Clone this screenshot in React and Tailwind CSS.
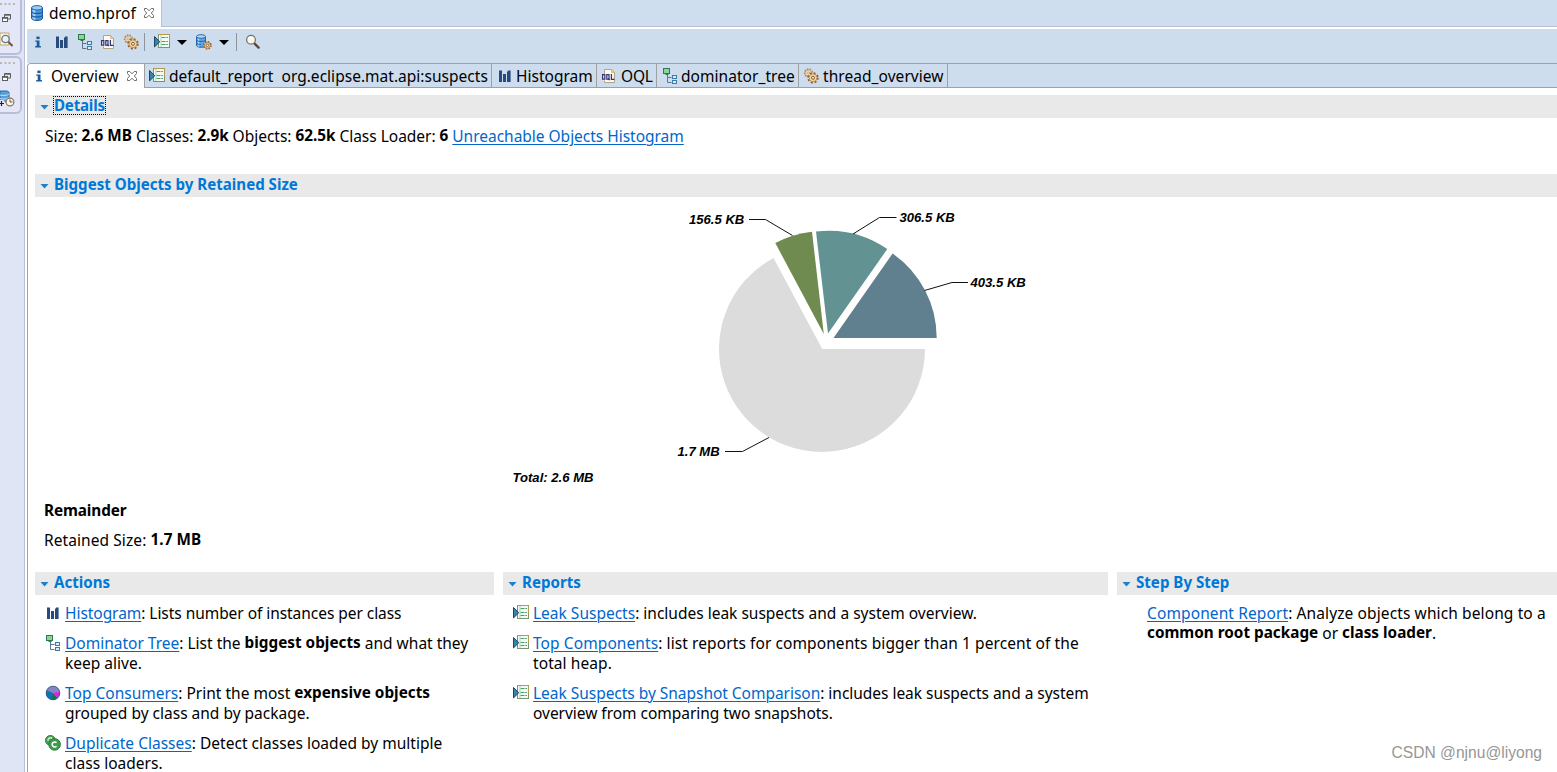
const Ico = ({ children, className = "" }) => (
  <svg viewBox="0 0 16 16" width="16" height="16" className={"block shrink-0 " + className}>{children}</svg>
);

const Info = ({ className }) => (
  <Ico className={className}>
    <rect x="6.4" y="2.6" width="3.2" height="2.5" fill="#1b5a9c" />
    <path d="M5.3 6.5h4.2v5.6h1.4v1.4H5.2v-1.4h1.5V7.7H5.3z" fill="#1b5a9c" />
  </Ico>
);

const Bars = ({ className }) => (
  <Ico className={className}>
    <path d="M2 2.6h3v11.4H2zM6 6h3v8H6zM10 3.600h1v-1h2.600v11.400H10z" fill="#274b7d" />
  </Ico>
);

const Tree = ({ className }) => (
  <Ico className={className}>
    <path d="M5.500 7v7.500h4M5.500 9.500h4" fill="none" stroke="#5c7690" />
    <rect x="1.500" y=".5" width="6" height="5" fill="#8ed39a" stroke="#2c7a4b" />
    <path d="M3.500 6.500h3" stroke="#2c7a4b" />
    <rect x="10.500" y="7.500" width="4" height="3" fill="#d7ebfa" stroke="#427aa8" />
    <rect x="10.500" y="12.500" width="4" height="3" fill="#d7ebfa" stroke="#427aa8" />
  </Ico>
);

const Oql = ({ className }) => (
  <Ico className={className}>
    <path d="M3.500 1.500h7l3 3v10h-10z" fill="#fbfaf4" stroke="#b3a584" />
    <path d="M10.500 1.500v3h3z" fill="#efd588" stroke="#c9a650" strokeWidth=".6" />
    <rect x="1.200" y="6" width="11.800" height="6.400" fill="#f4f3f8" />
    <g fill="none" stroke="#35346e" strokeWidth="1.200">
      <rect x="1.600" y="6.600" width="2.200" height="4.600" />
      <rect x="5.800" y="6.600" width="2.200" height="4.600" />
      <path d="M7.200 10.500l1.400 1.700M10.400 6v5.300h3" />
    </g>
  </Ico>
);

const Gears = ({ className }) => (
  <Ico className={className}>
    <circle cx="5.500" cy="5" r="3.900" fill="#f6e3c0" stroke="#a98258" strokeWidth="1.600" strokeDasharray="1.600 1.100" />
    <circle cx="5.500" cy="5" r="2.900" fill="#f6e6c8" stroke="#c09a6a" strokeWidth=".8" />
    <circle cx="5.500" cy="5" r="1" fill="#fff" stroke="#a98258" strokeWidth=".7" />
    <circle cx="10" cy="9.800" r="4.900" fill="#f1d8a8" stroke="#8c5c33" strokeWidth="1.600" strokeDasharray="2 1.850" />
    <circle cx="10" cy="9.800" r="3.900" fill="#f3d9a5" stroke="#a0703e" strokeWidth=".7" />
    <circle cx="10" cy="9.800" r="1.500" fill="#fbf6ec" stroke="#83532b" />
  </Ico>
);

const Report = ({ className }) => (
  <Ico className={className}>
    <rect x="4.500" y=".5" width="11" height="13" fill="#f2faf3" stroke="#7c9270" />
    <path d="M4.500 .5h11v8" fill="none" stroke="#b8994f" />
    <path d="M7.500 3.500h4M7.500 7.500h4M7.500 10.500h4" stroke="#48a067" />
    <path d="M12.500 3.500h1.200M12.500 7.500h1.200M12.500 10.500h1.200" stroke="#256d48" />
    <path d="M7 1v12" stroke="#8ec49d" strokeWidth=".7" />
    <path d="M.5 2.500l5.300 5.200-5.300 5.200z" fill="#3a83a8" stroke="#1c4669" />
  </Ico>
);

const Database = ({ className }) => (
  <Ico className={className}>
    <path d="M2.500 3v10.200c0 1.300 2.400 2.300 5.500 2.300s5.500-1 5.500-2.300V3z" fill="#4b95db" stroke="#1d5c9f" />
    <path d="M4.200 4.500v9.800M5.700 5v9.800" stroke="#b5dbfa" strokeWidth="1.200" />
    <path d="M2.500 6.200c0 1.300 2.400 2.200 5.500 2.200s5.500-.9 5.500-2.200M2.500 9.700c0 1.300 2.400 2.200 5.500 2.200s5.500-.9 5.500-2.200" fill="none" stroke="#1d5c9f" strokeWidth="1.200" />
    <ellipse cx="8" cy="2.800" rx="5.500" ry="2.200" fill="#9bcdf5" stroke="#2767a8" />
  </Ico>
);

const DatabaseGear = ({ className }) => (
  <Ico className={className}>
    <path d="M.5 2.700v8.800c0 1 2 1.800 4.500 1.800s4.500-.8 4.500-1.800V2.700z" fill="#5da4e4" stroke="#2767a8" />
    <path d="M2.500 4.500v8" stroke="#b9dcf8" strokeWidth="1.400" />
    <path d="M.5 5.700c0 1 2 1.800 4.500 1.800s4.500-.8 4.500-1.800M.5 8.800c0 1 2 1.800 4.500 1.800" fill="none" stroke="#2767a8" />
    <ellipse cx="5" cy="2.500" rx="4.500" ry="1.800" fill="#b4daf7" stroke="#2767a8" />
    <circle cx="11.400" cy="11.400" r="3.600" fill="#f1d8a8" stroke="#8c5c33" strokeWidth="1.500" strokeDasharray="1.600 1.230" />
    <circle cx="11.400" cy="11.400" r="2.900" fill="#f1d49b" stroke="#9a6a38" strokeWidth=".7" />
    <circle cx="11.400" cy="11.400" r="1.200" fill="#fff" stroke="#83532b" strokeWidth=".9" />
  </Ico>
);

const Magnifier = ({ className }) => (
  <Ico className={className}>
    <path d="M9.600 9.600l4 4" stroke="#5b4939" strokeWidth="2.400" strokeLinecap="round" />
    <circle cx="6" cy="5.800" r="4.400" fill="#f7f8ec" stroke="#77736a" strokeWidth="1.300" />
    <path d="M3.600 5.800A2.400 2.400 0 0 1 6 3.400" fill="none" stroke="#fff" strokeWidth="1.200" />
  </Ico>
);

const PieIcon = ({ className }) => (
  <Ico className={className}>
    <circle cx="8" cy="8" r="7" fill="#8583c0" />
    <path d="M8 8L1.600 5.200A7 7 0 0 0 6 14.700z" fill="#0f72b4" />
    <path d="M8 8l-2 6.700a7 7 0 0 0 6.500-1.400z" fill="#087a4a" />
    <path d="M8 8l4.500 4.500A7 7 0 0 0 15 7z" fill="#f414e8" />
    <circle cx="8" cy="8" r="6.800" fill="none" stroke="#365b8c" strokeWidth=".9" />
  </Ico>
);

const Duplicate = ({ className }) => (
  <Ico className={className}>
    <circle cx="5.400" cy="5.400" r="4.900" fill="#4ba356" stroke="#2c7d3d" />
    <path d="M7.200 3.400A2.600 2.600 0 0 0 3 5.800" fill="none" stroke="#d7f0d8" strokeWidth="1.300" />
    <circle cx="9.600" cy="9.400" r="5.800" fill="#3f9c4b" stroke="#2c7d3d" />
    <path d="M11.500 7.700a2.500 2.500 0 1 0 0 3.500" fill="none" stroke="#fff" strokeWidth="1.600" />
  </Ico>
);

const Close = ({ className = "" }) => (
  <svg viewBox="0 0 12 12" width="12" height="12" className={"block shrink-0 " + className}>
    <path d="M1.500 1.500h2.300L6 3.800l2.200-2.300h2.300v2L8.300 6l2.200 2.500v2H8.200L6 8.200l-2.200 2.300H1.500v-2L3.700 6 1.500 3.500z" fill="#fff" stroke="#6e6e6e" />
  </svg>
);

const Caret = ({ className = "" }) => (
  <svg viewBox="0 0 10 5" width="10" height="5" className={"block shrink-0 " + className}><path d="M0 0h10L5 5z" fill="#000" /></svg>
);

const Restore = ({ className = "" }) => (
  <svg viewBox="0 0 9 9" width="9" height="9" className={"block shrink-0 " + className}>
    <path d="M2.500 3V.5h6V5H6M2.500 1.200h6" fill="none" stroke="#5d5d5d" />
    <rect x=".5" y="3.500" width="5" height="4" fill="#fff" stroke="#5d5d5d" />
    <path d="M0 4h6" stroke="#5d5d5d" strokeWidth="1.600" />
  </svg>
);

const Dots = ({ className = "" }) => (
  <svg viewBox="0 0 16 2" width="16" height="2" className={"block " + className}>
    <path d="M0 1h2M4.500 1h2M8.500 1h2M13 1h2" stroke="#aaa59d" strokeWidth="1.600" />
  </svg>
);

const Header = ({ children, focus }) => (
  <div className="flex h-[23px] items-center bg-[#e9e9e9] pl-[5px]">
    <svg viewBox="0 0 8 5" width="9" height="5" className="mt-px mr-[4px] block"><path d="M0 0h8L4 4.500z" fill="#1a80d2" /></svg>
    <span className={"mb-[2px] border border-dotted text-[15.1px] leading-[17px] font-bold text-[#0078d7] " + (focus ? "border-black tracking-[-0.2px]" : "border-transparent")}>{children}</span>
  </div>
);

const Link = ({ children }) => (
  <a className="text-[#0066cc] underline decoration-1 underline-offset-2">{children}</a>
);

const B = ({ children }) => <b className="align-[1px] text-[15.3px] leading-none font-bold">{children}</b>;

const Item = ({ icon: Icon, className = "", children }) => (
  <div className={"flex leading-5 " + className}>
    <Icon className="mt-[2px] mr-1" />
    <div>{children}</div>
  </div>
);

const Tab = ({ icon: Icon, children, className }) => (
  <div className={"flex h-full items-center border-r border-[#a0a0a0] whitespace-pre " + className}>
    <Icon className="mr-[4px]" />
    <span>{children}</span>
  </div>
);

const Chart = () => (
  <svg viewBox="35 197 1522 303" width="1522" height="303" className="block shrink-0">
    <path d="M822.300 349H925A103 103 0 1 1 773.500 258z" fill="#dcdcdc" />
    <path d="M833.500 338L892.600 253.500A103 103 0 0 1 936.700 338z" fill="#607f8f" />
    <path d="M828 333.500L816 231.500A103 103 0 0 1 887.300 249z" fill="#629292" />
    <path d="M823.800 334L775.300 243A103 103 0 0 1 812 231.700z" fill="#6f8b50" />
    <g fill="none" stroke="#111">
      <path d="M749 219.500H765.500L792.500 235.500" />
      <path d="M853 234L879.500 217.500H896.500" />
      <path d="M924.500 290.500L952 282.500H968" />
      <path d="M725 451.500H742.500L769 437.500" />
    </g>
    <g className="text-[13.1px] font-bold italic" fill="#000">
      <text x="689" y="224">156.5 KB</text>
      <text x="899.500" y="222">306.5 KB</text>
      <text x="970.500" y="287">403.5 KB</text>
      <text x="677.500" y="456">1.7 MB</text>
      <text x="512.500" y="482">Total: 2.6 MB</text>
    </g>
  </svg>
);

export default function App() {
  return (
    <div className="relative flex h-[772px] w-[1557px] overflow-hidden bg-white font-['Noto_Sans',sans-serif] text-[15.5px] leading-5 text-black">
      <aside className="flex w-6 shrink-0 flex-col bg-[#dfe5f5]">
        <div className="flex h-[55px] w-[22px] flex-col rounded-br-[6px] border-r-2 border-b-2 border-[#b9bdd6] bg-[#e3e7f8]">
          <Dots className="mt-[3px]" />
          <Restore className="mt-[9px] ml-[2px]" />
          <svg viewBox="0 0 14 16" width="14" height="16" className="mt-[9px] block">
            <path d="M0 1h9v12H0z" fill="#f8f7ef" stroke="#c2a260" />
            <circle cx="5.500" cy="7" r="3.700" fill="#e8f2f8" stroke="#707880" strokeWidth="1.300" />
            <path d="M8.500 10l4 4" stroke="#6b5140" strokeWidth="2" />
          </svg>
        </div>
        <div className="mt-px flex h-[58px] w-[22px] flex-col rounded-tr-[6px] rounded-br-[6px] border-t-2 border-r-2 border-b-2 border-[#b9bdd6] bg-[#e3e7f8]">
          <Dots className="mt-[4px]" />
          <Restore className="mt-[9px] ml-[2px]" />
          <svg viewBox="0 0 15 17" width="15" height="17" className="mt-[8px] block">
            <path d="M0 1h6c2 0 3 .8 3 1.800v7C8 11 6 12 3 12H0z" fill="#579fdf" stroke="#2767a8" />
            <path d="M0 5c4 1 7 .5 9-1M0 8.500c4 1 7 .5 9-1" fill="none" stroke="#c4e2fa" />
            <path d="M0 10h3l2 2v5H0z" fill="#e3e7f8" />
            <path d="M0 13.500h4M1.500 11v5" stroke="#222" strokeWidth="1.200" />
            <circle cx="10" cy="12" r="3.900" fill="#fbf8ea" stroke="#8d7650" strokeWidth="1.200" />
            <path d="M10 9.500V12h2.500" fill="none" stroke="#555" />
          </svg>
        </div>
      </aside>

      <main className="flex w-[1533px] shrink-0 flex-col border-l border-[#b8bed8]">
        <div className="flex h-[27px] shrink-0 border-b border-[#b9bfd5] bg-[#cfdeee]">
          <div className="flex h-[27px] w-[137px] shrink-0 items-center border-r border-[#b9bfd5] bg-white pb-px pl-1">
            <Database className="mr-1" />
            <span className="tracking-[0.07px]">demo.hprof</span>
            <Close className="ml-[7px]" />
          </div>
        </div>

        <div className="mt-[2px] ml-[2px] flex h-[34px] shrink-0 items-start bg-[#cedded]">
          <div className="flex h-[26px] items-center">
            <Info className="ml-[3px]" />
            <Bars className="ml-[8px]" />
            <Tree className="ml-[7px]" />
            <Oql className="ml-[7px]" />
            <Gears className="ml-[7px]" />
            <div className="ml-[5px] h-[18px] w-px bg-[#8d949c]" />
            <Report className="ml-[9px]" />
            <Caret className="ml-[7px]" />
            <DatabaseGear className="ml-[9px]" />
            <Caret className="ml-[7px]" />
            <div className="ml-[7px] h-[18px] w-px bg-[#8d949c]" />
            <Magnifier className="ml-[8px]" />
          </div>
        </div>

        <div className="ml-[2px] flex h-[25px] shrink-0 rounded-tl-[4px] border-t border-b border-l border-[#a0a0a0] bg-[#cedded]">
          <div className="flex h-[24px] w-[117px] shrink-0 items-center rounded-tl-[3px] border-r border-[#a0a0a0] bg-white pl-[3px]">
            <Info className="mr-[4px]" />
            <span>Overview</span>
            <Close className="ml-[7px]" />
          </div>
          <Tab icon={Report} className="w-[347px] pl-1 tracking-[0.02px]">default_report  org.eclipse.mat.api:suspects</Tab>
          <Tab icon={Bars} className="w-[105px] pl-[5px] [&>svg]:mr-[3px]">Histogram</Tab>
          <Tab icon={Oql} className="w-[60px] pl-1 tracking-[-0.2px]">OQL</Tab>
          <Tab icon={Tree} className="w-[142px] pl-[5px] tracking-[0.05px] [&>svg]:mr-[3px]">dominator_tree</Tab>
          <Tab icon={Gears} className="w-[149px] pl-1 tracking-[0.06px]">thread_overview</Tab>
        </div>

        <div className="ml-[2px] flex flex-1 flex-col border-l border-[#a0a0a0] pt-[7px] pl-[7px]">
          <Header focus>Details</Header>
          <div className="mt-2 mb-[28px] h-5 pl-[10px] tracking-[-0.02px] whitespace-nowrap">
            Size: <B>2.6 MB</B> Classes: <B>2.9k</B> Objects: <B>62.5k</B> Class Loader: <B>6</B> <Link>Unreachable Objects Histogram</Link>
          </div>
          <Header>Biggest Objects by Retained Size</Header>
          <div className="h-[303px] font-['Liberation_Sans',Arial,sans-serif]"><Chart /></div>
          <div className="mt-px h-5 pl-[9px] tracking-[-0.1px]"><B>Remainder</B></div>
          <div className="mt-[9px] mb-[22px] h-5 pl-[9px] tracking-[0.08px]">Retained Size: <B>1.7 MB</B></div>

          <div className="grid grid-cols-[459px_605px_440px] gap-[9px]">
            <section>
              <Header>Actions</Header>
              <div className="mt-2 flex flex-col gap-[10px] pl-[10px] whitespace-nowrap">
                <Item icon={Bars} className="tracking-[-0.05px]"><Link>Histogram</Link>: Lists number of instances per class</Item>
                <Item icon={Tree}><Link>Dominator Tree</Link>: List the <B>biggest objects</B> and what they<br />keep alive.</Item>
                <Item icon={PieIcon}><Link>Top Consumers</Link>: Print the most <B>expensive objects</B><br />grouped by class and by package.</Item>
                <Item icon={Duplicate} className="tracking-[0.02px]"><Link>Duplicate Classes</Link>: Detect classes loaded by multiple<br />class loaders.</Item>
              </div>
            </section>
            <section>
              <Header>Reports</Header>
              <div className="mt-2 flex flex-col gap-[10px] pl-[10px] whitespace-nowrap">
                <Item icon={Report}><Link>Leak Suspects</Link>: includes leak suspects and a system overview.</Item>
                <Item icon={Report} className="tracking-[0.09px]"><Link>Top Components</Link>: list reports for components bigger than 1 percent of the<br />total heap.</Item>
                <Item icon={Report} className="tracking-[-0.03px]"><Link>Leak Suspects by Snapshot Comparison</Link>: includes leak suspects and a system<br />overview from comparing two snapshots.</Item>
              </div>
            </section>
            <section>
              <Header>Step By Step</Header>
              <div className="mt-2 pl-[30px] whitespace-nowrap">
                <span className="tracking-[0.11px]"><Link>Component Report</Link>: Analyze objects which belong to a</span><br /><B>common root package</B> or <B>class loader</B>.
              </div>
            </section>
          </div>
        </div>
      </main>

      <div className="absolute right-[15px] bottom-[9px] font-['Liberation_Sans',Arial,sans-serif] text-[15.6px] leading-5 text-[#969696]">CSDN @njnu@liyong</div>
    </div>
  );
}
